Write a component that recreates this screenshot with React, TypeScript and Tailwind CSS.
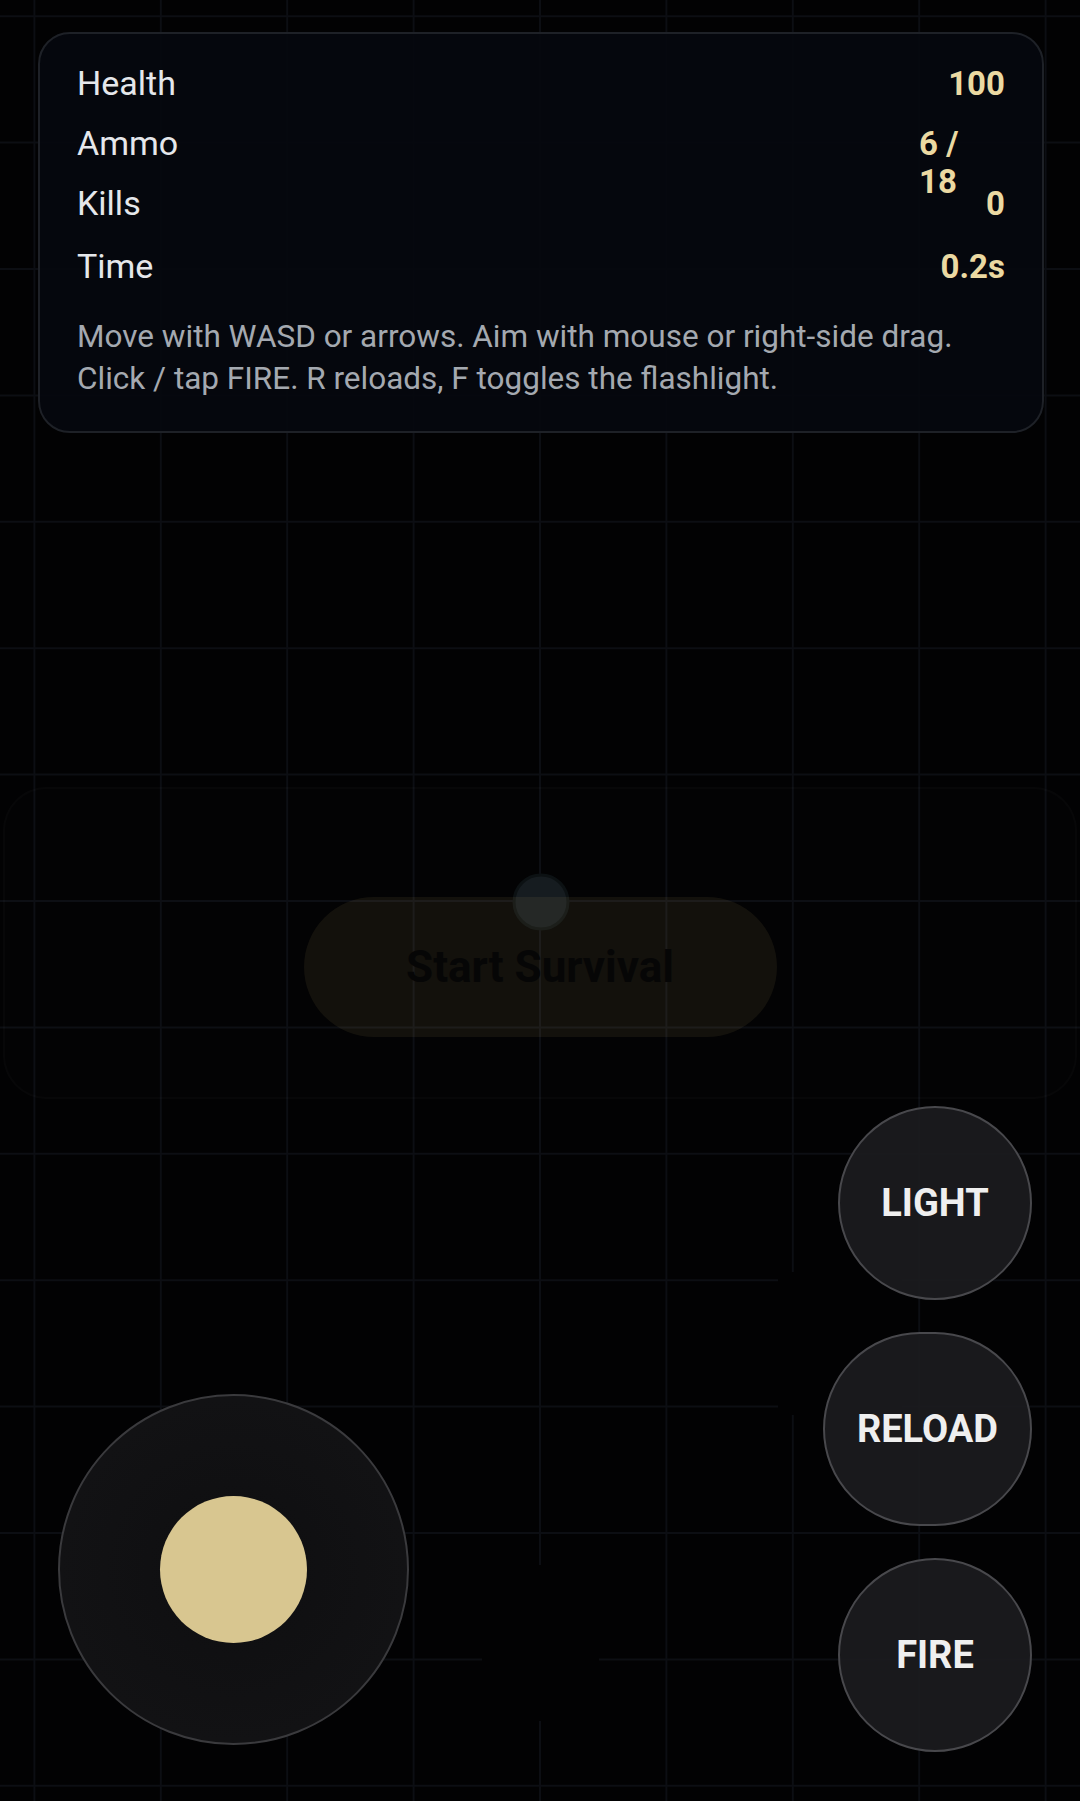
import React from 'react';

const stats = [
  { label: 'Health', value: '100' },
  { label: 'Ammo', value: '6 / 18', narrow: true },
  { label: 'Kills', value: '0' },
  { label: 'Time', value: '0.2s', shift: true },
];

const STEP = 126.4;
const CX = 540;
const CY = 901;

function Arena() {
  const xs = Array.from({ length: 9 }, (_, i) => CX + (i - 4) * STEP);
  const ys = Array.from({ length: 15 }, (_, i) => CY + (i - 7) * STEP);
  return (
    <svg className="absolute inset-0" width="1080" height="1801" viewBox="0 0 1080 1801">
      <rect width="1080" height="1801" fill="#020203" />
      {xs.map((x) => (
        <line key={'x' + x} x1={x} y1={0} x2={x} y2={1801} stroke="#0c0e13" strokeWidth="2" />
      ))}
      {ys.map((y) => (
        <line key={'y' + y} x1={0} y1={y} x2={1080} y2={y} stroke="#0c0e13" strokeWidth="2" />
      ))}
      {/* crates */}
      <rect x="482" y="1565" width="117" height="156" fill="#020203" />
      <rect x="778" y="1272" width="124" height="143" fill="#020203" />
      {/* player */}
      <circle cx="541" cy="902" r="27" fill="#151b1f" stroke="#0b1012" strokeWidth="3" />
    </svg>
  );
}

function StatRow({ label, value, narrow, shift }: { label: string; value: string; narrow?: boolean; shift?: boolean }) {
  return (
    <div className={'flex h-[60px] items-baseline justify-between ' + (shift ? 'mt-[3px]' : '')}>
      <span className="text-[34px] leading-[60px] text-[#e5e7eb]">{label}</span>
      {narrow ? (
        <span className="mr-[38px] w-[48px] text-[33px] font-bold leading-[38px] text-[#ebd9a2]">{value}</span>
      ) : (
        <span className="text-[33px] font-bold leading-[60px] text-[#ebd9a2]">{value}</span>
      )}
    </div>
  );
}

function PadButton({ children }: { children: React.ReactNode }) {
  return (
    <button className="flex h-[194px] min-w-[194px] items-center justify-center rounded-full border-2 border-[#48484c] bg-[#1c1c1f]/90 px-[32px] text-[38px] font-bold text-[#efefef]">
      {children}
    </button>
  );
}

export default function App() {
  return (
    <div className="relative h-[1801px] w-full overflow-hidden bg-[#020203] [font-family:Roboto,sans-serif]">
      <Arena />
      <div className="relative flex h-full flex-col">
        <div className="ml-[38px] mr-[36px] mt-[32px] rounded-[32px] border-2 border-[#1e2127] bg-[rgba(6,8,14,0.9)] px-[37px] pb-[32px] pt-[19px]">
          {stats.map((s) => (
            <StatRow key={s.label} {...s} />
          ))}
          <p className="mt-[20px] text-[31.5px] leading-[41.5px] text-[#a4a9b0]">
            Move with WASD or arrows. Aim with mouse or right-side drag.
            <br />
            Click / tap FIRE. R reloads, F toggles the flashlight.
          </p>
        </div>

        <div className="mx-[3px] mt-[354px] flex h-[312px] flex-col items-center justify-end rounded-[44px] border-2 border-white/[0.02] bg-white/[0.006] pb-[60px]">
          <button className="h-[140px] w-[473px] rounded-full bg-[rgba(228,196,120,0.075)] text-[44px] font-bold text-[#060606]">
            Start Survival
          </button>
        </div>

        <div className="mt-auto flex items-end justify-between pb-[49px] pl-[58px] pr-[48px]">
          <div className="mb-[7px] flex h-[351px] w-[351px] items-center justify-center rounded-full border-2 border-[#3a3a3d] bg-[radial-gradient(circle,#0e0e10_0%,#121214_70%,#161618_100%)]">
            <div className="h-[147px] w-[147px] rounded-full bg-[#d8c690]" />
          </div>
          <div className="flex flex-col items-end gap-[32px]">
            <PadButton>LIGHT</PadButton>
            <PadButton>RELOAD</PadButton>
            <PadButton>FIRE</PadButton>
          </div>
        </div>
      </div>
    </div>
  );
}
